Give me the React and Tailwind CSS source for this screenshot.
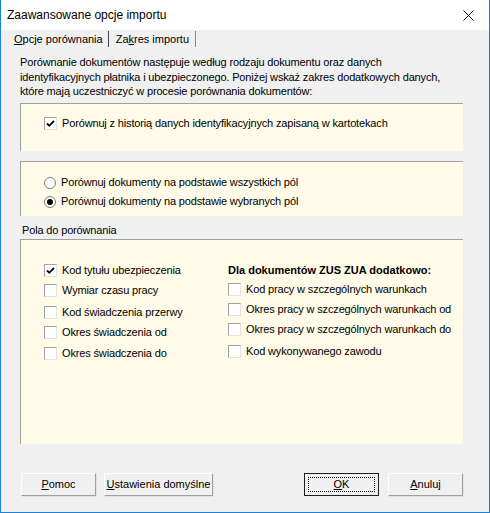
import React, { useState } from 'react';

const font = { fontFamily: '"Liberation Sans", Arial, sans-serif' };

const CheckBox = ({ checked, onChange }) => (
  <span
    onClick={onChange}
    className="w-[13px] h-[13px] shrink-0 bg-white border border-[#a0a0a0] border-r-[#e3e3e3] border-b-[#e3e3e3] flex items-center justify-center"
  >
    {checked && (
      <svg width="9" height="9" viewBox="0 0 9 9">
        <path d="M1 4.5 L3.3 6.8 L8 1.8" stroke="#000" strokeWidth="1.8" fill="none" />
      </svg>
    )}
  </span>
);

const Radio = ({ checked, onChange }) => (
  <span
    onClick={onChange}
    className="w-[12px] h-[12px] shrink-0 rounded-full bg-white border border-[#7a7a7a] flex items-center justify-center"
  >
    {checked && <span className="w-[6px] h-[6px] rounded-full bg-black" />}
  </span>
);

const Check = ({ label, checked, onChange, className = '' }) => (
  <label className={`flex items-center gap-[5px] h-[13px] ${className}`}>
    <CheckBox checked={checked} onChange={onChange} />
    <span className="text-[11px] text-black whitespace-nowrap">{label}</span>
  </label>
);

const Button = ({ children, focused, className = '' }) => (
  <button
    className={`h-[23px] w-[75px] bg-[#f0f0f0] text-[11px] text-black flex items-center justify-center ${
      focused
        ? 'border border-[#1e1e1e]'
        : 'border border-t-white border-l-white border-r-[#a0a0a0] border-b-[#a0a0a0] shadow-[1px_1px_0_#e3e3e3]'
    } ${className}`}
  >
    {focused ? (
      <span className="w-[67px] h-[15px] border border-dotted border-black flex items-center justify-center">
        {children}
      </span>
    ) : (
      children
    )}
  </button>
);

const App = () => {
  const [history, setHistory] = useState(true);
  const [mode, setMode] = useState('wybrane');
  const [left, setLeft] = useState([true, false, false, false, false]);
  const [right, setRight] = useState([false, false, false, false]);

  const leftItems = [
    { label: 'Kod tytułu ubezpieczenia', mt: 'mt-[24px]' },
    { label: 'Wymiar czasu pracy', mt: 'mt-[7px]' },
    { label: 'Kod świadczenia przerwy', mt: 'mt-[9px]' },
    { label: 'Okres świadczenia od', mt: 'mt-[7px]' },
    { label: 'Okres świadczenia do', mt: 'mt-[8px]' }
  ];
  const rightItems = [
    { label: 'Kod pracy w szczególnych warunkach', mt: 'mt-[6px]' },
    { label: 'Okres pracy w szczególnych warunkach od', mt: 'mt-[7px]' },
    { label: 'Okres pracy w szczególnych warunkach do', mt: 'mt-[7px]' },
    { label: 'Kod wykonywanego zawodu', mt: 'mt-[9px]' }
  ];

  return (
    <div
      style={font}
      className="w-[490px] h-[513px] bg-[#f0f0f0] border-x border-b border-[#1883d7] flex flex-col text-black tracking-[-0.15px]"
    >
      {/* title bar */}
      <div className="h-[30px] bg-white flex items-center justify-between pl-[6px] pr-[15px] tracking-normal">
        <span className="text-[12px]">Zaawansowane opcje importu</span>
        <svg width="11" height="11" viewBox="0 0 11 11">
          <path d="M0.5 0.5 L10.5 10.5 M10.5 0.5 L0.5 10.5" stroke="#111" strokeWidth="1" />
        </svg>
      </div>

      {/* tabs */}
      <div className="h-[18px] flex items-center text-[11px] pl-[13px] tracking-normal">
        <span>
          <span className="underline">O</span>pcje porównania
        </span>
        <span className="w-px h-[16px] bg-[#444] ml-[5px] mr-[7px]" />
        <span>
          Za<span className="underline">k</span>res importu
        </span>
        <span className="w-px h-[16px] bg-[#888] ml-[6px]" />
      </div>

      {/* description */}
      <p className="mt-[7px] ml-[19px] text-[11px] leading-[14.5px]">
        Porównanie dokumentów następuje według rodzaju dokumentu oraz danych
        <br />
        identyfikacyjnych płatnika i ubezpieczonego. Poniżej wskaż zakres dodatkowych danych,
        <br />
        które mają uczestniczyć w procesie porównania dokumentów:
      </p>

      {/* panel 1 */}
      <div className="mt-[4px] ml-[19px] w-[443px] h-[48px] bg-[#fffbe8] border-t border-l border-[#a0a0a0] pt-[13px] pl-[23px]">
        <Check
          label="Porównuj z historią danych identyfikacyjnych zapisaną w kartotekach"
          checked={history}
          onChange={() => setHistory(!history)}
        />
      </div>

      {/* panel 2 */}
      <div className="mt-[10px] ml-[19px] w-[443px] h-[55px] bg-[#fffbe8] border-t border-l border-[#a0a0a0] pt-[15px] pl-[23px] flex flex-col gap-[7px]">
        <label className="flex items-center gap-[5px] h-[12px]">
          <Radio checked={mode === 'wszystkie'} onChange={() => setMode('wszystkie')} />
          <span className="text-[11px]">Porównuj dokumenty na podstawie wszystkich pól</span>
        </label>
        <label className="flex items-center gap-[5px] h-[12px]">
          <Radio checked={mode === 'wybrane'} onChange={() => setMode('wybrane')} />
          <span className="text-[11px]">Porównuj dokumenty na podstawie wybranych pól</span>
        </label>
      </div>

      <div className="mt-[7px] ml-[21px] text-[11px] leading-[14px]">Pola do porównania</div>

      {/* panel 3 */}
      <div className="mt-[2px] ml-[19px] w-[443px] h-[205px] bg-[#fffbe8] border-t border-l border-[#a0a0a0] flex">
        <div className="w-[207px] pl-[23px] flex flex-col">
          {leftItems.map((it, i) => (
            <Check
              key={it.label}
              label={it.label}
              className={it.mt}
              checked={left[i]}
              onChange={() => setLeft(left.map((v, j) => (j === i ? !v : v)))}
            />
          ))}
        </div>
        <div className="flex flex-col">
          <div className="mt-[23px] h-[14px] text-[11px] font-bold leading-[14px] whitespace-nowrap tracking-normal">
            Dla dokumentów ZUS ZUA dodatkowo:
          </div>
          {rightItems.map((it, i) => (
            <Check
              key={it.label}
              label={it.label}
              className={it.mt}
              checked={right[i]}
              onChange={() => setRight(right.map((v, j) => (j === i ? !v : v)))}
            />
          ))}
        </div>
      </div>

      {/* buttons */}
      <div className="mt-[29px] ml-[20px] flex items-center tracking-normal">
        <Button>
          <span>
            <span className="underline">P</span>omoc
          </span>
        </Button>
        <Button className="ml-[8px] w-[109px]">
          <span>
            <span className="underline">U</span>stawienia domyślne
          </span>
        </Button>
        <Button focused className="ml-[91px]">
          <span>
            <span className="underline">O</span>K
          </span>
        </Button>
        <Button className="ml-[9px]">
          <span>
            <span className="underline">A</span>nuluj
          </span>
        </Button>
      </div>
    </div>
  );
};

export default App;
